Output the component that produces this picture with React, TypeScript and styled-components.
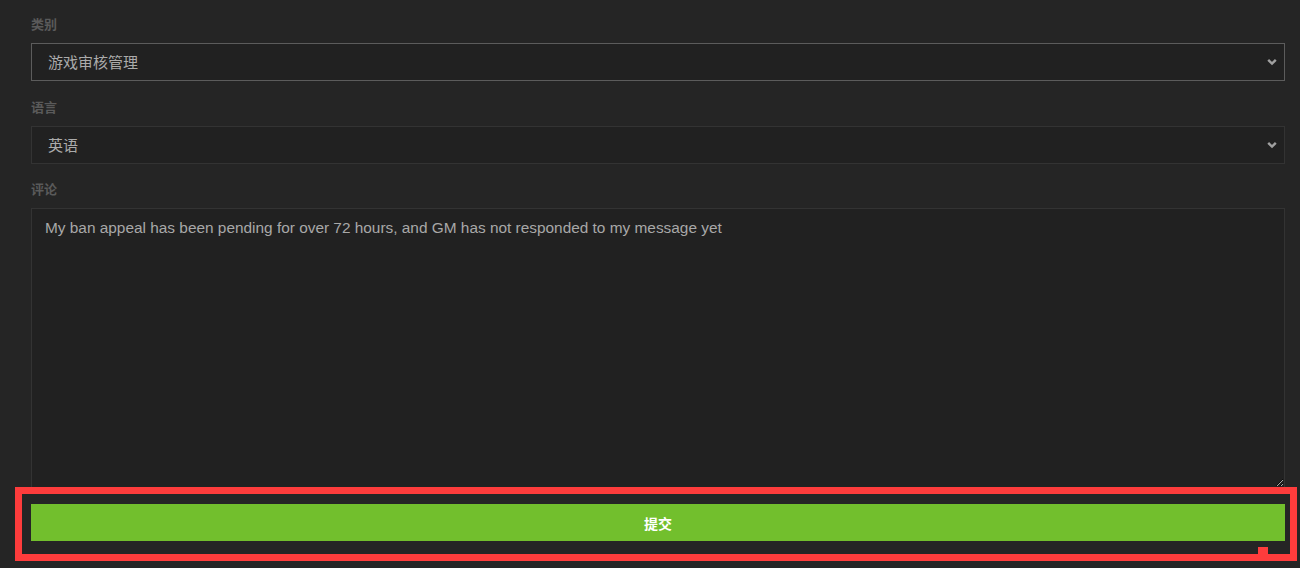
import styled, { createGlobalStyle } from 'styled-components';

const GlobalStyle = createGlobalStyle`
  html, body {
    margin: 0;
    padding: 0;
    background: #252525;
  }
  body {
    font-family: 'Liberation Sans', Arial, 'Noto Sans CJK SC', sans-serif;
  }
`;

const Page = styled.div`
  position: relative;
  height: 568px;
  padding: 16px 15px 0 31px;
  box-sizing: border-box;
  overflow: hidden;
`;

const Field = styled.div<{ $gap: number }>`
  display: flex;
  flex-direction: column;
  margin-bottom: ${(p) => p.$gap}px;
`;

const Label = styled.label`
  font-size: 13px;
  line-height: 18px;
  font-weight: bold;
  color: #5a5a5a;
  margin-bottom: 9px;
  font-family: 'Liberation Sans', 'Noto Sans CJK SC', sans-serif;
`;

const SelectWrap = styled.div`
  position: relative;
`;

const Select = styled.select<{ $focused?: boolean }>`
  appearance: none;
  -webkit-appearance: none;
  width: 100%;
  height: 38px;
  box-sizing: border-box;
  padding: 0 40px 0 16px;
  background: #212121;
  color: #ababab;
  border: 1px solid ${(p) => (p.$focused ? '#5c5c5c' : '#333333')};
  border-radius: 0;
  outline: none;
  font-size: 15px;
  font-family: 'Liberation Sans', 'Noto Sans CJK SC', sans-serif;
`;

const Chevron = styled.svg`
  position: absolute;
  right: 8px;
  top: 15px;
  pointer-events: none;
`;

const TextArea = styled.textarea`
  display: block;
  width: 100%;
  height: 280px;
  box-sizing: border-box;
  padding: 10px 13px;
  background: #212121;
  color: #a8a8a8;
  border: 1px solid #333333;
  border-radius: 0;
  outline: none;
  resize: vertical;
  font-size: 15.4px;
  line-height: 18px;
  font-family: 'Liberation Sans', Arial, sans-serif;
`;

const SubmitButton = styled.button`
  display: block;
  width: 100%;
  height: 37px;
  border: none;
  background: #72bf2d;
  color: #ffffff;
  font-size: 14px;
  font-weight: bold;
  cursor: pointer;
  font-family: 'Liberation Sans', 'Noto Sans CJK SC', sans-serif;
`;

const Highlight = styled.div`
  position: absolute;
  left: 15px;
  top: 487px;
  width: 1282px;
  height: 74px;
  box-sizing: border-box;
  border: 7px solid #fe3c3c;
  pointer-events: none;
`;

const Marker = styled.div`
  position: absolute;
  right: 22px;
  bottom: 0;
  width: 10px;
  height: 7px;
  background: #fe3c3c;
`;

const ChevronIcon = () => (
  <Chevron width="10" height="8" viewBox="0 0 10 8">
    <polyline points="1.2,1.8 5,5.6 8.8,1.8" fill="none" stroke="#a0a0a0" strokeWidth="2.4" />
  </Chevron>
);

const App = () => {
  return (
    <>
      <GlobalStyle />
      <Page>
        <Field $gap={18}>
          <Label>类别</Label>
          <SelectWrap>
            <Select $focused defaultValue="game">
              <option value="game">游戏审核管理</option>
            </Select>
            <ChevronIcon />
          </SelectWrap>
        </Field>
        <Field $gap={17}>
          <Label>语言</Label>
          <SelectWrap>
            <Select defaultValue="en">
              <option value="en">英语</option>
            </Select>
            <ChevronIcon />
          </SelectWrap>
        </Field>
        <Field $gap={16}>
          <Label>评论</Label>
          <TextArea defaultValue="My ban appeal has been pending for over 72 hours, and GM has not responded to my message yet" />
        </Field>
        <SubmitButton>提交</SubmitButton>
        <Highlight>
          <Marker />
        </Highlight>
      </Page>
    </>
  );
};

export default App;
